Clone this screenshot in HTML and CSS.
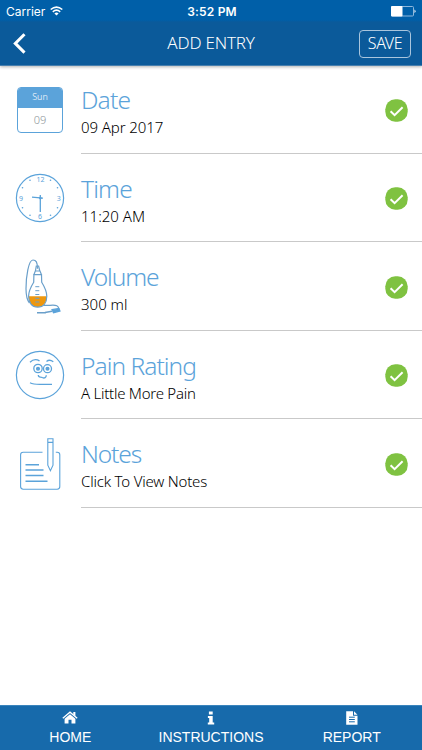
FILE: index.html
```html
<!DOCTYPE html>
<html lang="en">
<head>
    <meta charset="UTF-8">
    <meta name="viewport" content="width=device-width, initial-scale=1.0">
    <title>Add Entry</title>
    <link rel="stylesheet" href="styles.css">
</head>
<body>
    <header>
        <div class="status">
            <div class="carrier">
                <span>Carrier</span>
                <svg width="13" height="10" viewBox="0 0 13 10" fill="none" stroke="#fff" stroke-width="1.6">
                    <path d="M.7 3.5Q6.5-1.4 12.3 3.5M2.8 5.8Q6.5 2.6 10.2 5.8"/>
                    <path d="M4.4 7.4Q6.5 5.6 8.6 7.4L6.5 9.6z" fill="#fff" stroke="none"/>
                </svg>
            </div>
            <span class="clock">3:52 PM</span>
            <svg class="battery" width="25" height="11" viewBox="0 0 25 11">
                <rect x=".5" y=".5" width="22" height="9.5" rx="1" fill="none" stroke="#8fb8dc"/>
                <rect x="0" y="0" width="11.5" height="10.5" rx="1" fill="#fff"/>
                <path d="M23.5 3.5q2 1.7 0 3.5z" fill="#fff"/>
            </svg>
        </div>
        <div class="title-bar">
            <svg class="back" width="13" height="21" viewBox="0 0 13 21" fill="none" stroke="#fff" stroke-width="3">
                <path d="M11.5 1.2L2.3 10.4L11.5 19.6"/>
            </svg>
            <h1>ADD ENTRY</h1>
            <button class="save">SAVE</button>
        </div>
    </header>

    <main>
        <div class="row">
            <div class="icon">
                <div class="calendar">
                    <div class="day">Sun</div>
                    <div class="number">09</div>
                </div>
            </div>
            <div class="info">
                <div>
                    <h2 class="t-date">Date</h2>
                    <p class="v-date">09 Apr 2017</p>
                </div>
                <svg class="check" width="23" height="23" viewBox="0 0 23 23"><rect x=".3" y=".3" width="22.4" height="22.4" rx="10" fill="#7fc241"/><path d="M5.6 12.2L9.6 16.2L17.6 8.2" fill="none" stroke="#fff" stroke-width="2"/></svg>
            </div>
        </div>

        <div class="row">
            <div class="icon">
                <svg width="50" height="50" viewBox="0 0 50 50" fill="none" stroke="#5ba3da">
                    <circle cx="25" cy="25" r="23.6" stroke-width="1.2"/>
                    <path d="M17 24.2L28 25.2M25.3 22V39" stroke-width="1.3"/>
                    <circle cx="25.3" cy="25" r="1" fill="#5ba3da"/>
                    <g class="ticks">
                        <circle cx="15" cy="7.3" r=".8"/><circle cx="35.5" cy="7.3" r=".8"/>
                        <circle cx="7.5" cy="14.7" r=".8"/><circle cx="42.5" cy="14.7" r=".8"/>
                        <circle cx="7.5" cy="34.8" r=".8"/><circle cx="42.5" cy="34.8" r=".8"/>
                        <circle cx="15" cy="42.2" r=".8"/><circle cx="35.5" cy="42.2" r=".8"/>
                    </g>
                    <g class="hours">
                        <text x="25.4" y="9.2">12</text>
                        <text x="43.7" y="27.7">3</text>
                        <text x="25" y="46.3">6</text>
                        <text x="6" y="27.7">9</text>
                    </g>
                </svg>
            </div>
            <div class="info">
                <div>
                    <h2 class="t-time">Time</h2>
                    <p class="v-time">11:20 AM</p>
                </div>
                <svg class="check" width="23" height="23" viewBox="0 0 23 23"><rect x=".3" y=".3" width="22.4" height="22.4" rx="10" fill="#7fc241"/><path d="M5.6 12.2L9.6 16.2L17.6 8.2" fill="none" stroke="#fff" stroke-width="2"/></svg>
            </div>
        </div>

        <div class="row">
            <div class="icon">
                <svg width="50" height="60" viewBox="0 3.3 50 60" fill="none" stroke="#6a9fca" stroke-width="1.2">
                    <path d="M13.7 43.6H31.7C31.6 50 28.5 54.4 22.7 54.4S13.8 50 13.7 43.6z" fill="#ee970e" stroke="none"/>
                    <path d="M18.9 22H26.5L26.7 29.5C29.5 34 31.8 38.5 31.8 43.5C31.8 50 28.5 54.4 22.7 54.4S13.6 50 13.6 43.5C13.6 38.5 15.9 34 18.7 29.5z"/>
                    <path d="M18.9 22L20.3 18.3H25L26.5 22M20.4 18.3L21.3 13.3H23.6L24.8 18.3"/>
                    <path d="M22.5 16C22.5 9.5 21 7.3 18 7.3C13.5 7.3 11 24 11 36C11 43 11.8 47 14.5 50.5"/>
                    <path d="M20.3 34H24.3M20.3 38H24.3M20.3 41.8H24.3M20.3 45.6H24.3M20.3 49.3H24.3" stroke-width="1"/>
                    <path d="M28.5 52.6H35C41.5 51.8 43.8 53.5 43.7 56.5"/>
                    <path d="M22 60H31M30 59.9L37 58.5" stroke-width="1.5"/>
                    <path d="M37 57L44 55.8L45 58.4L38.5 60z" fill="#5ba3da" stroke="#5ba3da"/>
                </svg>
            </div>
            <div class="info">
                <div>
                    <h2 class="t-volume">Volume</h2>
                    <p class="v-volume">300 ml</p>
                </div>
                <svg class="check" width="23" height="23" viewBox="0 0 23 23"><rect x=".3" y=".3" width="22.4" height="22.4" rx="10" fill="#7fc241"/><path d="M5.6 12.2L9.6 16.2L17.6 8.2" fill="none" stroke="#fff" stroke-width="2"/></svg>
            </div>
        </div>

        <div class="row">
            <div class="icon">
                <svg width="50" height="50" viewBox="0 0 50 50" fill="none" stroke="#5ba3da" stroke-width="1.3">
                    <circle cx="25" cy="25" r="23.6" stroke-width="1.2"/>
                    <path d="M15 12.2Q19.5 7.8 24.5 10.9M31.5 11.5Q34.5 8.9 38.3 11.8"/>
                    <circle cx="23" cy="18.5" r="4.2"/><circle cx="32.5" cy="18.7" r="4"/>
                    <circle cx="23" cy="18.7" r="1.4" fill="#5ba3da"/><circle cx="32.5" cy="18.7" r="1.4" fill="#5ba3da"/>
                    <path d="M23.3 25C23.4 28.3 25.7 26.3 27.3 27.5C29.5 28.7 31.2 27.5 31.3 25.2M15 32.7Q18 34.3 25 34.3H37"/>
                </svg>
            </div>
            <div class="info">
                <div>
                    <h2 class="t-pain">Pain Rating</h2>
                    <p class="v-pain">A Little More Pain</p>
                </div>
                <svg class="check" width="23" height="23" viewBox="0 0 23 23"><rect x=".3" y=".3" width="22.4" height="22.4" rx="10" fill="#7fc241"/><path d="M5.6 12.2L9.6 16.2L17.6 8.2" fill="none" stroke="#fff" stroke-width="2"/></svg>
            </div>
        </div>

        <div class="row">
            <div class="icon">
                <svg width="50" height="54" viewBox="0 .8 50 54" fill="none" stroke="#5ba3da" stroke-width="1.1">
                    <path d="M27.5 16H8.2Q5.6 16 5.6 18.6V50.4Q5.6 53 8.2 53H42.2Q44.8 53 44.8 50.4V18.6Q44.8 16 42.2 16H40.8"/>
                    <path d="M10.5 28.5H24M10.5 33.8H28.5M10.5 39.3H28.5M10.5 45H32.5" stroke-width="1.4"/>
                    <path d="M32.8 2.5H38V29L35.4 34.5L32.8 29zM32.8 6.2H38"/>
                </svg>
            </div>
            <div class="info">
                <div>
                    <h2 class="t-notes">Notes</h2>
                    <p class="v-notes">Click To View Notes</p>
                </div>
                <svg class="check" width="23" height="23" viewBox="0 0 23 23"><rect x=".3" y=".3" width="22.4" height="22.4" rx="10" fill="#7fc241"/><path d="M5.6 12.2L9.6 16.2L17.6 8.2" fill="none" stroke="#fff" stroke-width="2"/></svg>
            </div>
        </div>
    </main>

    <footer>
        <div class="tab">
            <svg width="16" height="14" viewBox="0 0 16 14" fill="#fff">
                <path d="M8 3.3L13.4 7.8V12.6H9.5V8.8H6.5V12.6H2.6V7.8z"/>
                <path d="M.8 7.2L8 1.2L15.2 7.2" fill="none" stroke="#fff" stroke-width="1.3"/>
                <path d="M11.3 1H13.4V5.2L11.3 3.5z"/>
            </svg>
            <span>HOME</span>
        </div>
        <div class="tab">
            <svg width="16" height="14" viewBox="0 0 16 14" fill="#fff">
                <path d="M5.9.4H9.7V3.4H5.9zM4.9 5H9.7V11.6H11.2V13.6H4.8V11.6H6.2V7H4.9z"/>
            </svg>
            <span>INSTRUCTIONS</span>
        </div>
        <div class="tab">
            <svg width="16" height="14" viewBox="0 0 16 14">
                <path d="M2.2.3H9V4.7H13.5V13.7H2.2zM10 .3L13.5 3.8H10z" fill="#fff"/>
                <path d="M5 6.2H10.8M5 8.5H10.8M5 10.8H10.8" stroke="#176aab" fill="none"/>
            </svg>
            <span>REPORT</span>
        </div>
    </footer>
</body>
</html>
```
FILE: styles.css
```css
* {
    box-sizing: border-box;
}
body {
    font-family: "Noto Sans", sans-serif;
    font-weight: 300;
    background-color: #fff;
    margin: 0;
    height: 750px;
    display: flex;
    flex-direction: column;
    color: #000;
}
h1, h2, p {
    margin: 0;
    font-weight: 300;
    white-space: nowrap;
}
header {
    height: 66px;
    background: linear-gradient(#005fa8 0, #005fa8 20px, #0b5a9a 22px);
    border-bottom: 1px solid #477fae;
    box-shadow: 0 1px 3px rgba(0,0,0,0.3);
    color: #fff;
}
.status {
    display: grid;
    grid-template-columns: 1fr auto 1fr;
    align-items: center;
    height: 22px;
    padding: 0 6px 0 6px;
    font-family: Inter, sans-serif;
    font-size: 12px;
    font-weight: 400;
}
.carrier {
    display: flex;
    align-items: center;
    gap: 5px;
}
.clock {
    font-weight: 600;
    letter-spacing: 0.2px;
    padding-left: 2px;
}
.battery {
    justify-self: end;
}
.title-bar {
    display: grid;
    grid-template-columns: 1fr auto 1fr;
    align-items: center;
    height: 43px;
    padding: 0 11px 0 13px;
}
h1 {
    margin-left: -2px;
    font-size: 17px;
    line-height: 22px;
    letter-spacing: -0.2px;
    padding-bottom: 1px;
}
.save {
    justify-self: end;
    width: 52px;
    height: 28px;
    padding: 0 0 2px;
    border: 1px solid #a9c5dd;
    border-radius: 4px;
    background: none;
    color: #fff;
    font-family: inherit;
    font-size: 16px;
    font-weight: 300;
    letter-spacing: -0.4px;
}
main {
    flex: 1;
    margin-top: -1px;
}
.row {
    display: flex;
    height: 88.6px;
}
.icon {
    width: 81px;
    padding-left: 15px;
    display: flex;
    align-items: center;
}
.calendar {
    width: 46px;
    height: 46px;
    margin: 2px 0 0 2px;
    border: 1px solid #5ba3da;
    border-radius: 4px;
    text-align: center;
    overflow: hidden;
}
.day {
    height: 20px;
    background-color: #5ba3da;
    color: #fff;
    font-size: 9px;
    line-height: 17px;
}
.number {
    color: #8d959b;
    font-size: 11px;
    line-height: 23px;
}
.hours {
    fill: #5ba3da;
    stroke: none;
    font-size: 7px;
    font-weight: 400;
    text-anchor: middle;
}
.ticks {
    fill: #5ba3da;
    stroke: none;
}
.info {
    flex: 1;
    display: flex;
    justify-content: space-between;
    padding: 18px 14px 0 0;
    border-bottom: 1px solid #c9c9c9;
}
.check {
    margin-top: 15.5px;
}
h2 {
    color: #5ba3da;
    font-size: 24.5px;
    line-height: 34px;
}
.t-date {
    letter-spacing: -0.8px;
}
.t-time {
    letter-spacing: -0.8px;
}
.t-volume {
    letter-spacing: -1.1px;
}
.t-pain {
    letter-spacing: -0.95px;
}
.t-notes {
    letter-spacing: -1.1px;
}
p {
    font-size: 15px;
    line-height: 20px;
}
.v-date {
    letter-spacing: -0.1px;
}
.v-pain {
    letter-spacing: -0.25px;
}
.v-notes {
    letter-spacing: -0.2px;
}
footer {
    height: 45px;
    display: flex;
    background-color: #176aab;
    border-top: 1px solid #3a84bc;
    color: #fff;
    font-family: "Liberation Sans", Arial, sans-serif;
    font-size: 14px;
    font-weight: 400;
}
.tab {
    flex: 1;
    display: flex;
    flex-direction: column;
    align-items: center;
    padding-top: 5px;
    gap: 4px;
    line-height: 16px;
}
```
